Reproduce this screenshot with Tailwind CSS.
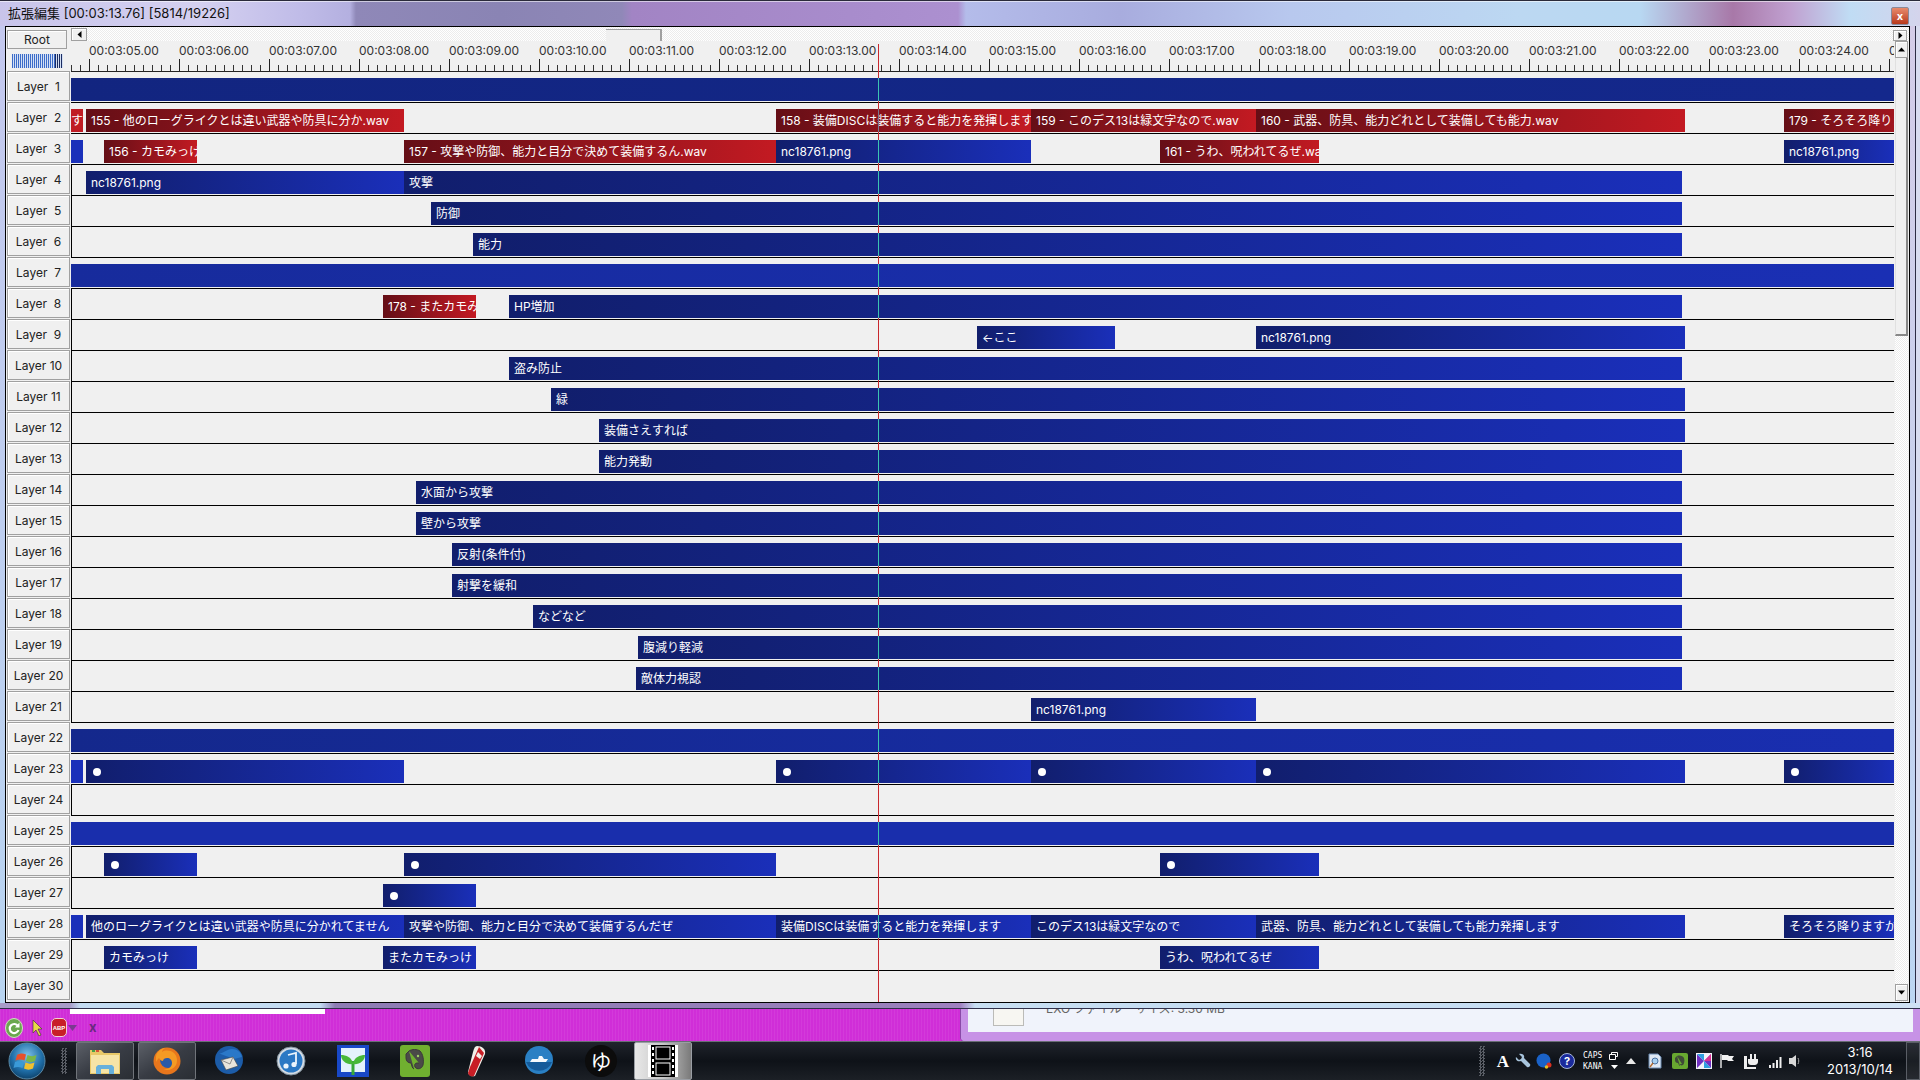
<!DOCTYPE html>
<html lang="ja">
<head>
<meta charset="utf-8">
<script src="https://cdn.jsdelivr.net/npm/@tailwindcss/browser@4"></script>
<title>拡張編集</title>
</head>
<body class="w-[1920px] h-[1080px] overflow-hidden flex flex-col bg-[#d02ed8] text-[12px] leading-none text-[#222] font-['Inter','Noto_Sans_CJK_JP',sans-serif]">

<!-- upper window -->
<div class="h-[1009px] flex flex-col shrink-0 bg-[#c0d8f2] border-b border-[#30304a]">
  <div class="h-[26px] flex items-center justify-between pl-[8px] pr-[11px] border-t border-[#2a2a3a] shadow-[inset_0_1px_0_#ffffff90] bg-[linear-gradient(90deg,#c8c4ea_0,#d4d0f0_200px,#c0bce8_300px,#b4b0e0_350px,#8f88b8_356px,#8a84b4_500px,#9088b8_622px,#a284c4_632px,#a88ccc_850px,#ac90d0_958px,#b4bcea_966px,#a8acde_1120px,#b8c8ee_1290px,#bcd8f2_1520px,#b8d8f2_1640px,#a878a8_1733px,#c0a0d0_1790px,#c0dcf4_1850px,#d4d4ec_1920px)]">
    <span class="text-[13px] text-[#111] whitespace-pre -mt-[1px]">拡張編集 [00:03:13.76] [5814/19226]</span>
    <div class="mt-[5px] w-[18px] h-[18px] rounded-[2px] border border-[#8a8a9a] bg-linear-to-b from-[#e88a6c] to-[#b8381a] flex items-center justify-center text-white text-[11px] font-bold">x</div>
  </div>
  <div class="flex-1 flex min-h-0">
    <div class="w-[5px] bg-linear-to-b from-[#c4c8ee] to-[#b8d4f0]"></div>
    <div class="w-[1905px] h-[977px] border border-black bg-[#f0f0f0] relative">
      <div class="grid grid-cols-[65px_1824px_14px] grid-rows-[14px_31px_930px] relative">
        <!-- root cell -->
        <div class="row-span-2 pl-px pt-[3px]">
          <div class="w-[60px] h-[19px] border border-[#a0a0a0] shadow-[inset_1px_1px_0_#fff] flex items-center justify-center text-[#222]">Root</div>
          <div class="mt-[5px] ml-[5px] w-[51px] h-[14px] bg-[repeating-linear-gradient(90deg,#3c6cc8_0,#3c6cc8_1px,#d4e0f4_1px,#d4e0f4_2px)] flex justify-end"><div class="w-[8px] h-full bg-[repeating-linear-gradient(90deg,#1c2c60_0,#1c2c60_1px,#d4e0f4_1px,#d4e0f4_2px)]"></div></div>
        </div>
        <!-- horizontal scrollbar -->
        <div class="col-span-2 flex items-end justify-between pr-[2px] bg-[repeating-conic-gradient(#ffffff_0_25%,#ececec_0_50%)] bg-[length:2px_2px]">
          <div class="w-[16px] h-[13px] bg-[#f0f0f0] border border-[#a0a0a0] shadow-[inset_1px_1px_0_#fff] flex items-center justify-center"><svg width="5" height="7" viewBox="0 0 5 7"><path d="M4.5 0v7L.5 3.500z" fill="#000"/></svg></div>
          <div class="w-[56px] h-[12px] bg-[#f0f0f0] border-t border-r-2 border-[#a0a0a0] ml-[519px] mr-auto"></div>
          <div class="w-[14px] h-[11px] bg-[#f0f0f0] border border-[#a0a0a0] shadow-[inset_1px_1px_0_#fff] flex items-center justify-center"><svg width="5" height="7" viewBox="0 0 5 7"><path d="M.5 0v7l4-3.500z" fill="#000"/></svg></div>
        </div>
        <!-- ruler -->
        <div class="w-[1823px] overflow-hidden flex flex-col text-[#333]">
          <div class="h-[18px] pl-[18px] flex items-center whitespace-nowrap pt-[2px]">
            <span class="w-[90px] shrink-0">00:03:05.00</span><span class="w-[90px] shrink-0">00:03:06.00</span><span class="w-[90px] shrink-0">00:03:07.00</span><span class="w-[90px] shrink-0">00:03:08.00</span><span class="w-[90px] shrink-0">00:03:09.00</span><span class="w-[90px] shrink-0">00:03:10.00</span><span class="w-[90px] shrink-0">00:03:11.00</span><span class="w-[90px] shrink-0">00:03:12.00</span><span class="w-[90px] shrink-0">00:03:13.00</span><span class="w-[90px] shrink-0">00:03:14.00</span><span class="w-[90px] shrink-0">00:03:15.00</span><span class="w-[90px] shrink-0">00:03:16.00</span><span class="w-[90px] shrink-0">00:03:17.00</span><span class="w-[90px] shrink-0">00:03:18.00</span><span class="w-[90px] shrink-0">00:03:19.00</span><span class="w-[90px] shrink-0">00:03:20.00</span><span class="w-[90px] shrink-0">00:03:21.00</span><span class="w-[90px] shrink-0">00:03:22.00</span><span class="w-[90px] shrink-0">00:03:23.00</span><span class="w-[90px] shrink-0">00:03:24.00</span><span class="w-[90px] shrink-0">00:03:25.00</span>
          </div>
          <div class="h-[13px] border-b border-[#222] bg-[repeating-linear-gradient(90deg,#333_0,#333_1px,transparent_1px,transparent_9px)] bg-[length:100%_6px] bg-bottom bg-no-repeat">
            <div class="ml-[18px] h-full bg-[repeating-linear-gradient(90deg,#222_0,#222_1px,transparent_1px,transparent_90px)]"></div>
          </div>
        </div>
        <!-- vertical scrollbar -->
        <div class="row-span-2 w-[13px] flex flex-col bg-[repeating-conic-gradient(#ffffff_0_25%,#ececec_0_50%)] bg-[length:2px_2px]">
          <div class="h-[17px] shrink-0 bg-[#f0f0f0] border border-[#a0a0a0] shadow-[inset_1px_1px_0_#fff] flex items-center justify-center"><svg width="7" height="5" viewBox="0 0 7 5"><path d="M0 4.500h7L3.500.5z" fill="#000"/></svg></div>
          <div class="h-[278px] shrink-0 bg-[#f0f0f0] border-r-2 border-b-2 border-[#888] border-l border-l-[#e0e0e0]"></div>
          <div class="flex-1"></div>
          <div class="h-[17px] shrink-0 mb-[1px] bg-[#f0f0f0] border border-[#a0a0a0] shadow-[inset_1px_1px_0_#fff] flex items-center justify-center"><svg width="7" height="5" viewBox="0 0 7 5"><path d="M0 .5h7L3.500 4.500z" fill="#000"/></svg></div>
        </div>

        <!-- layers -->
        <div class="col-span-2 flex flex-col pr-px">

          <div class="h-[31px] flex"><div class="ml-px w-[63px] h-[30px] -mt-px mr-px pt-px border border-[#a0a0a0] shadow-[inset_1px_1px_0_#fff] flex items-center justify-center whitespace-pre">Layer  1</div>
            <div class="relative w-[1823px] h-[31px] border-b border-black">
              <div class="absolute top-[6px] h-[23px] left-0 w-[1823px] bg-linear-to-r from-[#122580] to-[#14288c]"></div>
              <i class="absolute left-[807px] top-[6px] h-[23px] w-px z-20 bg-[#3cc4b2]"></i>
            </div></div>

          <div class="h-[31px] flex"><div class="ml-px w-[63px] h-[30px] -mt-px mr-px pt-px border border-[#a0a0a0] shadow-[inset_1px_1px_0_#fff] flex items-center justify-center whitespace-pre">Layer  2</div>
            <div class="relative w-[1823px] h-[31px] border-b border-black">
              <div class="absolute top-[6px] h-[23px] left-0 w-[12px] flex items-center justify-end overflow-hidden whitespace-nowrap text-white bg-[#c01c24]"><span>です</span></div>
              <div class="absolute top-[6px] h-[23px] left-[15px] w-[318px] flex items-center overflow-hidden whitespace-nowrap pl-[5px] text-white bg-linear-to-r from-[#650e16] to-[#c31a22]">155 - 他のローグライクとは違い武器や防具に分か.wav</div>
              <div class="absolute top-[6px] h-[23px] left-[705px] w-[255px] flex items-center overflow-hidden whitespace-nowrap pl-[5px] text-white bg-linear-to-r from-[#650e16] to-[#c31a22]">158 - 装備DISCは装備すると能力を発揮します.wav</div>
              <div class="absolute top-[6px] h-[23px] left-[960px] w-[225px] flex items-center overflow-hidden whitespace-nowrap pl-[5px] text-white bg-linear-to-r from-[#650e16] to-[#c31a22]">159 - このデス13は緑文字なので.wav</div>
              <div class="absolute top-[6px] h-[23px] left-[1185px] w-[429px] flex items-center overflow-hidden whitespace-nowrap pl-[5px] text-white bg-linear-to-r from-[#650e16] to-[#c31a22]">160 - 武器、防具、能力どれとして装備しても能力.wav</div>
              <div class="absolute top-[6px] h-[23px] left-[1713px] w-[110px] flex items-center overflow-hidden whitespace-nowrap pl-[5px] text-white bg-linear-to-r from-[#650e16] to-[#a0161e]">179 - そろそろ降りますか.wav</div>
              <i class="absolute left-[807px] top-[6px] h-[23px] w-px z-20 bg-[#7a7a90]"></i>
            </div></div>

          <div class="h-[31px] flex"><div class="ml-px w-[63px] h-[30px] -mt-px mr-px pt-px border border-[#a0a0a0] shadow-[inset_1px_1px_0_#fff] flex items-center justify-center whitespace-pre">Layer  3</div>
            <div class="relative w-[1823px] h-[31px] border-b border-black">
              <div class="absolute top-[6px] h-[23px] left-0 w-[12px] bg-[#1a30ba]"></div>
              <div class="absolute top-[6px] h-[23px] left-[33px] w-[93px] flex items-center overflow-hidden whitespace-nowrap pl-[5px] text-white bg-linear-to-r from-[#650e16] to-[#c31a22]">156 - カモみっけ.wav</div>
              <div class="absolute top-[6px] h-[23px] left-[333px] w-[372px] flex items-center overflow-hidden whitespace-nowrap pl-[5px] text-white bg-linear-to-r from-[#650e16] to-[#c31a22]">157 - 攻撃や防御、能力と目分で決めて装備するん.wav</div>
              <div class="absolute top-[6px] h-[23px] left-[705px] w-[255px] flex items-center overflow-hidden whitespace-nowrap pl-[5px] text-white bg-linear-to-r from-[#111e6c] to-[#1a2fba]">nc18761.png</div>
              <div class="absolute top-[6px] h-[23px] left-[1089px] w-[159px] flex items-center overflow-hidden whitespace-nowrap pl-[5px] text-white bg-linear-to-r from-[#650e16] to-[#c31a22]">161 - うわ、呪われてるぜ.wav</div>
              <div class="absolute top-[6px] h-[23px] left-[1713px] w-[110px] flex items-center overflow-hidden whitespace-nowrap pl-[5px] text-white bg-linear-to-r from-[#111e6c] to-[#1a2fba]">nc18761.png</div>
              <i class="absolute left-[807px] top-[6px] h-[23px] w-px z-20 bg-[#3cc4b2]"></i>
            </div></div>

          <div class="h-[31px] flex"><div class="ml-px w-[63px] h-[30px] -mt-px mr-px pt-px border border-[#a0a0a0] shadow-[inset_1px_1px_0_#fff] flex items-center justify-center whitespace-pre">Layer  4</div>
            <div class="relative w-[1823px] h-[31px] border-b border-black shadow-[inset_1px_0_0_#000]">
              <div class="absolute top-[6px] h-[23px] left-[15px] w-[318px] flex items-center overflow-hidden whitespace-nowrap pl-[5px] text-white bg-linear-to-r from-[#111e6c] to-[#1a2fba]">nc18761.png</div>
              <div class="absolute top-[6px] h-[23px] left-[333px] w-[1278px] flex items-center overflow-hidden whitespace-nowrap pl-[5px] text-white bg-linear-to-r from-[#111e6c] to-[#1a2fba]">攻撃</div>
              <i class="absolute left-[807px] top-[6px] h-[23px] w-px z-20 bg-[#3cc4b2]"></i>
            </div></div>

          <div class="h-[31px] flex"><div class="ml-px w-[63px] h-[30px] -mt-px mr-px pt-px border border-[#a0a0a0] shadow-[inset_1px_1px_0_#fff] flex items-center justify-center whitespace-pre">Layer  5</div>
            <div class="relative w-[1823px] h-[31px] border-b border-black shadow-[inset_1px_0_0_#000]">
              <div class="absolute top-[6px] h-[23px] left-[360px] w-[1251px] flex items-center overflow-hidden whitespace-nowrap pl-[5px] text-white bg-linear-to-r from-[#111e6c] to-[#1a2fba]">防御</div>
              <i class="absolute left-[807px] top-[6px] h-[23px] w-px z-20 bg-[#3cc4b2]"></i>
            </div></div>

          <div class="h-[31px] flex"><div class="ml-px w-[63px] h-[30px] -mt-px mr-px pt-px border border-[#a0a0a0] shadow-[inset_1px_1px_0_#fff] flex items-center justify-center whitespace-pre">Layer  6</div>
            <div class="relative w-[1823px] h-[31px] border-b border-black shadow-[inset_1px_0_0_#000]">
              <div class="absolute top-[6px] h-[23px] left-[402px] w-[1209px] flex items-center overflow-hidden whitespace-nowrap pl-[5px] text-white bg-linear-to-r from-[#111e6c] to-[#1a2fba]">能力</div>
              <i class="absolute left-[807px] top-[6px] h-[23px] w-px z-20 bg-[#3cc4b2]"></i>
            </div></div>

          <div class="h-[31px] flex"><div class="ml-px w-[63px] h-[30px] -mt-px mr-px pt-px border border-[#a0a0a0] shadow-[inset_1px_1px_0_#fff] flex items-center justify-center whitespace-pre">Layer  7</div>
            <div class="relative w-[1823px] h-[31px] border-b border-black">
              <div class="absolute top-[6px] h-[23px] left-0 w-[1823px] bg-linear-to-r from-[#172b9c] to-[#1a2fb4]"></div>
              <i class="absolute left-[807px] top-[6px] h-[23px] w-px z-20 bg-[#3cc4b2]"></i>
            </div></div>

          <div class="h-[31px] flex"><div class="ml-px w-[63px] h-[30px] -mt-px mr-px pt-px border border-[#a0a0a0] shadow-[inset_1px_1px_0_#fff] flex items-center justify-center whitespace-pre">Layer  8</div>
            <div class="relative w-[1823px] h-[31px] border-b border-black shadow-[inset_1px_0_0_#000]">
              <div class="absolute top-[6px] h-[23px] left-[312px] w-[93px] flex items-center overflow-hidden whitespace-nowrap pl-[5px] text-white bg-linear-to-r from-[#650e16] to-[#c31a22]">178 - またカモみっけ.wav</div>
              <div class="absolute top-[6px] h-[23px] left-[438px] w-[1173px] flex items-center overflow-hidden whitespace-nowrap pl-[5px] text-white bg-linear-to-r from-[#111e6c] to-[#1a2fba]">HP増加</div>
              <i class="absolute left-[807px] top-[6px] h-[23px] w-px z-20 bg-[#3cc4b2]"></i>
            </div></div>

          <div class="h-[31px] flex"><div class="ml-px w-[63px] h-[30px] -mt-px mr-px pt-px border border-[#a0a0a0] shadow-[inset_1px_1px_0_#fff] flex items-center justify-center whitespace-pre">Layer  9</div>
            <div class="relative w-[1823px] h-[31px] border-b border-black shadow-[inset_1px_0_0_#000]">
              <div class="absolute top-[6px] h-[23px] left-[906px] w-[138px] flex items-center overflow-hidden whitespace-nowrap pl-[5px] text-white bg-linear-to-r from-[#111e6c] to-[#1a2fba]">←ここ</div>
              <div class="absolute top-[6px] h-[23px] left-[1185px] w-[429px] flex items-center overflow-hidden whitespace-nowrap pl-[5px] text-white bg-linear-to-r from-[#111e6c] to-[#1a2fba]">nc18761.png</div>
            </div></div>

          <div class="h-[31px] flex"><div class="ml-px w-[63px] h-[30px] -mt-px mr-px pt-px border border-[#a0a0a0] shadow-[inset_1px_1px_0_#fff] flex items-center justify-center whitespace-pre">Layer 10</div>
            <div class="relative w-[1823px] h-[31px] border-b border-black shadow-[inset_1px_0_0_#000]">
              <div class="absolute top-[6px] h-[23px] left-[438px] w-[1173px] flex items-center overflow-hidden whitespace-nowrap pl-[5px] text-white bg-linear-to-r from-[#111e6c] to-[#1a2fba]">盗み防止</div>
              <i class="absolute left-[807px] top-[6px] h-[23px] w-px z-20 bg-[#3cc4b2]"></i>
            </div></div>

          <div class="h-[31px] flex"><div class="ml-px w-[63px] h-[30px] -mt-px mr-px pt-px border border-[#a0a0a0] shadow-[inset_1px_1px_0_#fff] flex items-center justify-center whitespace-pre">Layer 11</div>
            <div class="relative w-[1823px] h-[31px] border-b border-black shadow-[inset_1px_0_0_#000]">
              <div class="absolute top-[6px] h-[23px] left-[480px] w-[1134px] flex items-center overflow-hidden whitespace-nowrap pl-[5px] text-white bg-linear-to-r from-[#111e6c] to-[#1a2fba]">緑</div>
              <i class="absolute left-[807px] top-[6px] h-[23px] w-px z-20 bg-[#3cc4b2]"></i>
            </div></div>

          <div class="h-[31px] flex"><div class="ml-px w-[63px] h-[30px] -mt-px mr-px pt-px border border-[#a0a0a0] shadow-[inset_1px_1px_0_#fff] flex items-center justify-center whitespace-pre">Layer 12</div>
            <div class="relative w-[1823px] h-[31px] border-b border-black shadow-[inset_1px_0_0_#000]">
              <div class="absolute top-[6px] h-[23px] left-[528px] w-[1086px] flex items-center overflow-hidden whitespace-nowrap pl-[5px] text-white bg-linear-to-r from-[#111e6c] to-[#1a2fba]">装備さえすれば</div>
              <i class="absolute left-[807px] top-[6px] h-[23px] w-px z-20 bg-[#3cc4b2]"></i>
            </div></div>

          <div class="h-[31px] flex"><div class="ml-px w-[63px] h-[30px] -mt-px mr-px pt-px border border-[#a0a0a0] shadow-[inset_1px_1px_0_#fff] flex items-center justify-center whitespace-pre">Layer 13</div>
            <div class="relative w-[1823px] h-[31px] border-b border-black shadow-[inset_1px_0_0_#000]">
              <div class="absolute top-[6px] h-[23px] left-[528px] w-[1083px] flex items-center overflow-hidden whitespace-nowrap pl-[5px] text-white bg-linear-to-r from-[#111e6c] to-[#1a2fba]">能力発動</div>
              <i class="absolute left-[807px] top-[6px] h-[23px] w-px z-20 bg-[#3cc4b2]"></i>
            </div></div>

          <div class="h-[31px] flex"><div class="ml-px w-[63px] h-[30px] -mt-px mr-px pt-px border border-[#a0a0a0] shadow-[inset_1px_1px_0_#fff] flex items-center justify-center whitespace-pre">Layer 14</div>
            <div class="relative w-[1823px] h-[31px] border-b border-black shadow-[inset_1px_0_0_#000]">
              <div class="absolute top-[6px] h-[23px] left-[345px] w-[1266px] flex items-center overflow-hidden whitespace-nowrap pl-[5px] text-white bg-linear-to-r from-[#111e6c] to-[#1a2fba]">水面から攻撃</div>
              <i class="absolute left-[807px] top-[6px] h-[23px] w-px z-20 bg-[#3cc4b2]"></i>
            </div></div>

          <div class="h-[31px] flex"><div class="ml-px w-[63px] h-[30px] -mt-px mr-px pt-px border border-[#a0a0a0] shadow-[inset_1px_1px_0_#fff] flex items-center justify-center whitespace-pre">Layer 15</div>
            <div class="relative w-[1823px] h-[31px] border-b border-black shadow-[inset_1px_0_0_#000]">
              <div class="absolute top-[6px] h-[23px] left-[345px] w-[1266px] flex items-center overflow-hidden whitespace-nowrap pl-[5px] text-white bg-linear-to-r from-[#111e6c] to-[#1a2fba]">壁から攻撃</div>
              <i class="absolute left-[807px] top-[6px] h-[23px] w-px z-20 bg-[#3cc4b2]"></i>
            </div></div>

          <div class="h-[31px] flex"><div class="ml-px w-[63px] h-[30px] -mt-px mr-px pt-px border border-[#a0a0a0] shadow-[inset_1px_1px_0_#fff] flex items-center justify-center whitespace-pre">Layer 16</div>
            <div class="relative w-[1823px] h-[31px] border-b border-black shadow-[inset_1px_0_0_#000]">
              <div class="absolute top-[6px] h-[23px] left-[381px] w-[1230px] flex items-center overflow-hidden whitespace-nowrap pl-[5px] text-white bg-linear-to-r from-[#111e6c] to-[#1a2fba]">反射(条件付)</div>
              <i class="absolute left-[807px] top-[6px] h-[23px] w-px z-20 bg-[#3cc4b2]"></i>
            </div></div>

          <div class="h-[31px] flex"><div class="ml-px w-[63px] h-[30px] -mt-px mr-px pt-px border border-[#a0a0a0] shadow-[inset_1px_1px_0_#fff] flex items-center justify-center whitespace-pre">Layer 17</div>
            <div class="relative w-[1823px] h-[31px] border-b border-black shadow-[inset_1px_0_0_#000]">
              <div class="absolute top-[6px] h-[23px] left-[381px] w-[1230px] flex items-center overflow-hidden whitespace-nowrap pl-[5px] text-white bg-linear-to-r from-[#111e6c] to-[#1a2fba]">射撃を緩和</div>
              <i class="absolute left-[807px] top-[6px] h-[23px] w-px z-20 bg-[#3cc4b2]"></i>
            </div></div>

          <div class="h-[31px] flex"><div class="ml-px w-[63px] h-[30px] -mt-px mr-px pt-px border border-[#a0a0a0] shadow-[inset_1px_1px_0_#fff] flex items-center justify-center whitespace-pre">Layer 18</div>
            <div class="relative w-[1823px] h-[31px] border-b border-black shadow-[inset_1px_0_0_#000]">
              <div class="absolute top-[6px] h-[23px] left-[462px] w-[1149px] flex items-center overflow-hidden whitespace-nowrap pl-[5px] text-white bg-linear-to-r from-[#111e6c] to-[#1a2fba]">などなど</div>
              <i class="absolute left-[807px] top-[6px] h-[23px] w-px z-20 bg-[#3cc4b2]"></i>
            </div></div>

          <div class="h-[31px] flex"><div class="ml-px w-[63px] h-[30px] -mt-px mr-px pt-px border border-[#a0a0a0] shadow-[inset_1px_1px_0_#fff] flex items-center justify-center whitespace-pre">Layer 19</div>
            <div class="relative w-[1823px] h-[31px] border-b border-black shadow-[inset_1px_0_0_#000]">
              <div class="absolute top-[6px] h-[23px] left-[567px] w-[1044px] flex items-center overflow-hidden whitespace-nowrap pl-[5px] text-white bg-linear-to-r from-[#111e6c] to-[#1a2fba]">腹減り軽減</div>
              <i class="absolute left-[807px] top-[6px] h-[23px] w-px z-20 bg-[#3cc4b2]"></i>
            </div></div>

          <div class="h-[31px] flex"><div class="ml-px w-[63px] h-[30px] -mt-px mr-px pt-px border border-[#a0a0a0] shadow-[inset_1px_1px_0_#fff] flex items-center justify-center whitespace-pre">Layer 20</div>
            <div class="relative w-[1823px] h-[31px] border-b border-black shadow-[inset_1px_0_0_#000]">
              <div class="absolute top-[6px] h-[23px] left-[565px] w-[1046px] flex items-center overflow-hidden whitespace-nowrap pl-[5px] text-white bg-linear-to-r from-[#111e6c] to-[#1a2fba]">敵体力視認</div>
              <i class="absolute left-[807px] top-[6px] h-[23px] w-px z-20 bg-[#3cc4b2]"></i>
            </div></div>

          <div class="h-[31px] flex"><div class="ml-px w-[63px] h-[30px] -mt-px mr-px pt-px border border-[#a0a0a0] shadow-[inset_1px_1px_0_#fff] flex items-center justify-center whitespace-pre">Layer 21</div>
            <div class="relative w-[1823px] h-[31px] border-b border-black shadow-[inset_1px_0_0_#000]">
              <div class="absolute top-[6px] h-[23px] left-[960px] w-[225px] flex items-center overflow-hidden whitespace-nowrap pl-[5px] text-white bg-linear-to-r from-[#111e6c] to-[#1a2fba]">nc18761.png</div>
            </div></div>

          <div class="h-[31px] flex"><div class="ml-px w-[63px] h-[30px] -mt-px mr-px pt-px border border-[#a0a0a0] shadow-[inset_1px_1px_0_#fff] flex items-center justify-center whitespace-pre">Layer 22</div>
            <div class="relative w-[1823px] h-[31px] border-b border-black">
              <div class="absolute top-[6px] h-[23px] left-0 w-[1823px] bg-linear-to-r from-[#14288c] to-[#192eb0]"></div>
              <i class="absolute left-[807px] top-[6px] h-[23px] w-px z-20 bg-[#3cc4b2]"></i>
            </div></div>

          <div class="h-[31px] flex"><div class="ml-px w-[63px] h-[30px] -mt-px mr-px pt-px border border-[#a0a0a0] shadow-[inset_1px_1px_0_#fff] flex items-center justify-center whitespace-pre">Layer 23</div>
            <div class="relative w-[1823px] h-[31px] border-b border-black">
              <div class="absolute top-[6px] h-[23px] left-0 w-[12px] bg-[#1a30ba]"></div>
              <div class="absolute top-[6px] h-[23px] left-[15px] w-[318px] flex items-center pl-[7px] bg-linear-to-r from-[#111e6c] to-[#1a2fba]"><span class="w-2 h-2 rounded-full bg-white"></span></div>
              <div class="absolute top-[6px] h-[23px] left-[705px] w-[255px] flex items-center pl-[7px] bg-linear-to-r from-[#111e6c] to-[#1a2fba]"><span class="w-2 h-2 rounded-full bg-white"></span></div>
              <div class="absolute top-[6px] h-[23px] left-[960px] w-[225px] flex items-center pl-[7px] bg-linear-to-r from-[#111e6c] to-[#1a2fba]"><span class="w-2 h-2 rounded-full bg-white"></span></div>
              <div class="absolute top-[6px] h-[23px] left-[1185px] w-[429px] flex items-center pl-[7px] bg-linear-to-r from-[#111e6c] to-[#1a2fba]"><span class="w-2 h-2 rounded-full bg-white"></span></div>
              <div class="absolute top-[6px] h-[23px] left-[1713px] w-[110px] flex items-center pl-[7px] bg-linear-to-r from-[#111e6c] to-[#1a2fba]"><span class="w-2 h-2 rounded-full bg-white"></span></div>
              <i class="absolute left-[807px] top-[6px] h-[23px] w-px z-20 bg-[#3cc4b2]"></i>
            </div></div>

          <div class="h-[31px] flex"><div class="ml-px w-[63px] h-[30px] -mt-px mr-px pt-px border border-[#a0a0a0] shadow-[inset_1px_1px_0_#fff] flex items-center justify-center whitespace-pre">Layer 24</div>
            <div class="relative w-[1823px] h-[31px] border-b border-black shadow-[inset_1px_0_0_#000]"></div></div>

          <div class="h-[31px] flex"><div class="ml-px w-[63px] h-[30px] -mt-px mr-px pt-px border border-[#a0a0a0] shadow-[inset_1px_1px_0_#fff] flex items-center justify-center whitespace-pre">Layer 25</div>
            <div class="relative w-[1823px] h-[31px] border-b border-black">
              <div class="absolute top-[6px] h-[23px] left-0 w-[1823px] bg-[#192eac]"></div>
              <i class="absolute left-[807px] top-[6px] h-[23px] w-px z-20 bg-[#3cc4b2]"></i>
            </div></div>

          <div class="h-[31px] flex"><div class="ml-px w-[63px] h-[30px] -mt-px mr-px pt-px border border-[#a0a0a0] shadow-[inset_1px_1px_0_#fff] flex items-center justify-center whitespace-pre">Layer 26</div>
            <div class="relative w-[1823px] h-[31px] border-b border-black shadow-[inset_1px_0_0_#000]">
              <div class="absolute top-[6px] h-[23px] left-[33px] w-[93px] flex items-center pl-[7px] bg-linear-to-r from-[#111e6c] to-[#1a2fba]"><span class="w-2 h-2 rounded-full bg-white"></span></div>
              <div class="absolute top-[6px] h-[23px] left-[333px] w-[372px] flex items-center pl-[7px] bg-linear-to-r from-[#111e6c] to-[#1a2fba]"><span class="w-2 h-2 rounded-full bg-white"></span></div>
              <div class="absolute top-[6px] h-[23px] left-[1089px] w-[159px] flex items-center pl-[7px] bg-linear-to-r from-[#111e6c] to-[#1a2fba]"><span class="w-2 h-2 rounded-full bg-white"></span></div>
            </div></div>

          <div class="h-[31px] flex"><div class="ml-px w-[63px] h-[30px] -mt-px mr-px pt-px border border-[#a0a0a0] shadow-[inset_1px_1px_0_#fff] flex items-center justify-center whitespace-pre">Layer 27</div>
            <div class="relative w-[1823px] h-[31px] border-b border-black shadow-[inset_1px_0_0_#000]">
              <div class="absolute top-[6px] h-[23px] left-[312px] w-[93px] flex items-center pl-[7px] bg-linear-to-r from-[#111e6c] to-[#1a2fba]"><span class="w-2 h-2 rounded-full bg-white"></span></div>
            </div></div>

          <div class="h-[31px] flex"><div class="ml-px w-[63px] h-[30px] -mt-px mr-px pt-px border border-[#a0a0a0] shadow-[inset_1px_1px_0_#fff] flex items-center justify-center whitespace-pre">Layer 28</div>
            <div class="relative w-[1823px] h-[31px] border-b border-black">
              <div class="absolute top-[6px] h-[23px] left-0 w-[12px] bg-[#1a30ba]"></div>
              <div class="absolute top-[6px] h-[23px] left-[15px] w-[318px] flex items-center overflow-hidden whitespace-nowrap pl-[5px] text-white bg-linear-to-r from-[#111e6c] to-[#1a2fba]">他のローグライクとは違い武器や防具に分かれてません</div>
              <div class="absolute top-[6px] h-[23px] left-[333px] w-[372px] flex items-center overflow-hidden whitespace-nowrap pl-[5px] text-white bg-linear-to-r from-[#111e6c] to-[#1a2fba]">攻撃や防御、能力と目分で決めて装備するんだぜ</div>
              <div class="absolute top-[6px] h-[23px] left-[705px] w-[255px] flex items-center overflow-hidden whitespace-nowrap pl-[5px] text-white bg-linear-to-r from-[#111e6c] to-[#1a2fba]">装備DISCは装備すると能力を発揮します</div>
              <div class="absolute top-[6px] h-[23px] left-[960px] w-[225px] flex items-center overflow-hidden whitespace-nowrap pl-[5px] text-white bg-linear-to-r from-[#111e6c] to-[#1a2fba]">このデス13は緑文字なので</div>
              <div class="absolute top-[6px] h-[23px] left-[1185px] w-[429px] flex items-center overflow-hidden whitespace-nowrap pl-[5px] text-white bg-linear-to-r from-[#111e6c] to-[#1a2fba]">武器、防具、能力どれとして装備しても能力発揮します</div>
              <div class="absolute top-[6px] h-[23px] left-[1713px] w-[110px] flex items-center overflow-hidden whitespace-nowrap pl-[5px] text-white bg-linear-to-r from-[#111e6c] to-[#1a2fba]">そろそろ降りますか</div>
              <i class="absolute left-[807px] top-[6px] h-[23px] w-px z-20 bg-[#3cc4b2]"></i>
            </div></div>

          <div class="h-[31px] flex"><div class="ml-px w-[63px] h-[30px] -mt-px mr-px pt-px border border-[#a0a0a0] shadow-[inset_1px_1px_0_#fff] flex items-center justify-center whitespace-pre">Layer 29</div>
            <div class="relative w-[1823px] h-[31px] border-b border-black shadow-[inset_1px_0_0_#000]">
              <div class="absolute top-[6px] h-[23px] left-[33px] w-[93px] flex items-center overflow-hidden whitespace-nowrap pl-[5px] text-white bg-linear-to-r from-[#111e6c] to-[#1a2fba]">カモみっけ</div>
              <div class="absolute top-[6px] h-[23px] left-[312px] w-[93px] flex items-center overflow-hidden whitespace-nowrap pl-[5px] text-white bg-linear-to-r from-[#111e6c] to-[#1a2fba]">またカモみっけ</div>
              <div class="absolute top-[6px] h-[23px] left-[1089px] w-[159px] flex items-center overflow-hidden whitespace-nowrap pl-[5px] text-white bg-linear-to-r from-[#111e6c] to-[#1a2fba]">うわ、呪われてるぜ</div>
            </div></div>

          <div class="h-[31px] flex"><div class="ml-px w-[63px] h-[30px] -mt-px mr-px pt-px border border-[#a0a0a0] shadow-[inset_1px_1px_0_#fff] flex items-center justify-center whitespace-pre">Layer 30</div>
            <div class="relative w-[1823px] h-[31px] shadow-[inset_1px_0_0_#000]"></div></div>
        </div>

        <!-- playhead -->
        <div class="absolute left-[872px] top-[17px] bottom-0 w-px bg-[#c8282e] z-10"></div>
      </div>
    </div>
    <div class="w-[10px] flex">
      <div class="w-[5px] bg-linear-to-b from-[#d4cce8] to-[#bcd6f2]"></div>
      <div class="w-[1px] bg-[#2c2c44]"></div>
      <div class="flex-1 bg-[#d8dcf0]"></div>
    </div>
  </div>
  <div class="h-[5px] bg-[linear-gradient(90deg,#a89cc8_0,#a89cc8_70px,#c4dcf2_80px,#c4dcf2_320px,#8e7cb4_335px,#9a80bc_900px,#a080c0_960px,#c8dff2_975px,#c4dcf2_1300px,#d0e2f4_1920px)]"></div>
</div>

<!-- lower strip: magenta browser toolbar and a window behind -->
<div class="h-[32px] flex shrink-0">
  <div class="w-[961px] flex flex-col bg-[#d02ed8] bg-[repeating-linear-gradient(90deg,#ffffff10_0,#ffffff10_1px,transparent_1px,transparent_3px)]">
    <div class="h-[5px] pl-[70px]"><div class="w-[255px] h-full bg-white"></div></div>
    <div class="flex-1 flex items-center pl-[5px]">
      <svg width="18" height="20" viewBox="0 0 18 20"><ellipse cx="9" cy="10" rx="8.500" ry="9.500" fill="#6aa84f" stroke="#cfe3c0"/><path d="M13 8a4.500 4.500 0 1 0 .5 4" fill="none" stroke="#fff" stroke-width="2.200"/><path d="M14.500 4.500v5h-4.500z" fill="#fff"/></svg>
      <svg class="ml-[9px]" width="10" height="16" viewBox="0 0 10 16"><path d="M1 0v13l3-3 3 6 2-1-3-6h4z" fill="#e8d84a" stroke="#333" stroke-width=".6"/></svg>
      <div class="ml-[9px] w-[16px] h-[19px] rounded-[5px] bg-[#c81e28] border border-[#f0d0d8] flex items-center justify-center text-white text-[6px] font-bold font-['Liberation_Sans',sans-serif]">ABP</div>
      <svg class="ml-px" width="9" height="6" viewBox="0 0 9 6"><path d="M0 0h9L4.500 6z" fill="#7a3a90"/></svg>
      <span class="ml-[12px] text-[#6a2a80] font-bold text-[13px]">x</span>
    </div>
  </div>
  <div class="flex-1 border-l-[7px] border-r-[7px] border-b-[9px] border-[#c792e6] rounded-bl-[4px] shadow-[-1px_0_0_#8a4aa8] bg-[#f0f3fb] flex items-start overflow-hidden">
    <div class="ml-[25px] w-[31px] h-[17px] bg-[#f7f6f2] border-r border-b border-l border-[#bbbbb8]"></div>
    <span class="ml-[22px] -mt-[6px] text-[#666] whitespace-pre">EXO ファイル    サイズ: 3.30 MB</span>
  </div>
</div>

<!-- taskbar -->
<div class="h-[39px] shrink-0 flex items-center border-t border-[#6a6e76] bg-linear-to-b from-[#20242c] via-[#0e1218] to-[#1c2026] text-white">
  <div class="w-[54px] flex justify-center">
    <svg width="38" height="38" viewBox="0 0 38 38"><defs><radialGradient id="orb" cx=".5" cy=".35" r=".7"><stop offset="0" stop-color="#7ec2e8"/><stop offset=".6" stop-color="#1f6ea8"/><stop offset="1" stop-color="#0a3a60"/></radialGradient></defs><circle cx="19" cy="19" r="18" fill="url(#orb)" stroke="#5a8aa8"/><path d="M9 13c3-2 6-2 9-.5l-1.500 6c-3-1.500-6-1.500-9 0z" fill="#e8502a"/><path d="M19.500 13c3 1.500 6 1.500 9 0l-1.500 6c-3 1.500-6 1.500-9 0z" fill="#7ab848"/><path d="M7 20c3-1.500 6-1.500 9 0l-1.500 6c-3-1.500-6-1.500-9 0z" fill="#3a9ad8"/><path d="M17.500 20.500c3 1.500 6 1.500 9 0l-1.500 6c-3 1.500-6 1.500-9 0z" fill="#f0c030"/></svg>
  </div>
  <div class="w-[20px] h-[26px] flex justify-center"><div class="w-[6px] h-full bg-[repeating-conic-gradient(#5a5e66_0_25%,transparent_0_50%)] bg-[length:3px_3px]"></div></div>

  <div class="w-[62px] flex justify-center"><div class="w-[58px] h-[38px] rounded-[2px] border border-[#70747a] bg-linear-to-br from-[#5c6068] via-[#383c44] to-[#2a2e34] flex items-center justify-center">
    <svg width="34" height="30" viewBox="0 0 34 30"><path d="M2 4h11l3 3h16v21H2z" fill="#e8c868"/><path d="M3 9h28v18H3z" fill="#f6e4a6"/><path d="M4 4h3v2H4z" fill="#48a048"/><path d="M8 4h3v2H8z" fill="#d85038"/><path d="M10 19h14l2 2v7h-5v-5h-8v5H8v-7z" fill="#66b0dc"/></svg></div></div>
  <div class="w-[62px] flex justify-center"><div class="w-[58px] h-[38px] rounded-[2px] border border-[#70747a] bg-linear-to-br from-[#5c6068] via-[#383c44] to-[#2a2e34] flex items-center justify-center">
    <svg width="30" height="30" viewBox="0 0 30 30"><circle cx="15" cy="15" r="13.500" fill="#e8761c"/><circle cx="16" cy="14" r="8" fill="#2a5aa8"/><path d="M4 10c1-4 5-8 9-8-2 1-3 3-3 4 3-2 8-2 12 1 3 3 4 8 2 12-3 5-9 6-13 4 5 1 9-2 9-6 0-3-2-5-5-5-2 0-4 1-4 3-2 0-3-1-4-3-1 1-2 2-3 4z" fill="#f59a24"/></svg></div></div>

  <div class="w-[62px] flex justify-center"><svg width="30" height="32" viewBox="0 0 30 32"><circle cx="15" cy="15" r="14" fill="#1c5ca8"/><path d="M4 8c4 2 8-4 14-4 5 0 9 3 10 8l-8 2z" fill="#2a78c8"/><path d="M7 15l12-3 5 9-12 4z" fill="#e8e4dc" stroke="#444" stroke-width=".6"/><path d="M7 15l9 4 3-7" fill="none" stroke="#777" stroke-width=".8"/></svg></div>
  <div class="w-[62px] flex justify-center"><svg width="30" height="30" viewBox="0 0 30 30"><circle cx="15" cy="15" r="14" fill="#d4dce4" stroke="#7e8e9a"/><circle cx="15" cy="15" r="11.500" fill="#2a78c4"/><path d="M12 9l8-2v11" fill="none" stroke="#eaf4fc" stroke-width="1.800"/><circle cx="10" cy="20" r="2.600" fill="#eaf4fc"/><circle cx="18" cy="18.500" r="2.600" fill="#eaf4fc"/></svg></div>
  <div class="w-[62px] flex justify-center"><svg width="32" height="32" viewBox="0 0 32 32"><rect width="32" height="32" fill="#1848c8"/><rect x="4" y="3" width="24" height="24" fill="#e4f2fc"/><path d="M16 30V16" stroke="#38a838" stroke-width="3"/><path d="M16 19C15 12 9 10 4 10c0 6 6 10 12 9zM16 19c1-7 7-9 12-9 0 6-6 10-12 9z" fill="#48b838"/></svg></div>
  <div class="w-[62px] flex justify-center"><svg width="30" height="32" viewBox="0 0 30 32"><rect width="30" height="32" rx="3" fill="#70b030"/><path d="M9 6c3-2 8-2 11 0 3 3 4 9 3 14-1 4-6 5-8 2-1-2 0-4 2-4h2M9 6L6 9v4c0 3 2 5 5 5 1 3 1 5 3 6" fill="#4a4a48" stroke="#3a3a38"/><circle cx="18" cy="11" r="1.200" fill="#9fcf68"/></svg></div>
  <div class="w-[62px] flex justify-center"><svg width="22" height="32" viewBox="0 0 22 32"><path d="M11 1c5 0 9 3 8 8L9 31c-4 1-7-1-7-4L7 7c1-4 2-6 4-6z" fill="#f2efe8"/><path d="M13 2l5 6L8 31c-3 1-5 0-6-3L4 22z" fill="#c81e26"/><path d="M12 7l4 4-2 3-4-3z" fill="#f2efe8"/></svg></div>
  <div class="w-[62px] flex justify-center"><svg width="30" height="32" viewBox="0 0 30 32"><circle cx="15" cy="15" r="14" fill="#2a80c4"/><path d="M2 17h26a14 14 0 0 1-26 0z" fill="#145a9a"/><path d="M6 17l2-3h6l1-3h3l2 3h4l-2 3z" fill="#f4f8fc"/></svg></div>
  <div class="w-[62px] flex justify-center"><div class="w-[32px] h-[32px] rounded-full bg-[#0c0c0c] flex items-center justify-center text-white text-[21px]">ゆ</div></div>
  <div class="w-[62px] flex justify-center"><div class="w-[58px] h-[38px] rounded-[2px] border border-[#9a9ea4] bg-linear-to-r from-[#e8e8e8] via-[#c8c8c8] to-[#7a7a7a] flex items-center justify-center">
    <svg width="30" height="32" viewBox="0 0 30 32"><rect width="30" height="32" fill="#fff"/><rect x="3" width="24" height="32" fill="#000"/><rect x="8" y="2" width="14" height="12" fill="#000" stroke="#fff"/><rect x="8" y="18" width="14" height="12" fill="#000" stroke="#fff"/><path d="M4 2h2v3H4zM4 8h2v3H4zM4 14h2v3H4zM4 20h2v3H4zM4 26h2v3H4zM24 2h2v3h-2zM24 8h2v3h-2zM24 14h2v3h-2zM24 20h2v3h-2zM24 26h2v3h-2z" fill="#fff"/></svg></div></div>

  <div class="w-[791px] flex justify-end"><div class="w-[6px] h-[30px] bg-[repeating-conic-gradient(#5a5e66_0_25%,transparent_0_50%)] bg-[length:3px_3px]"></div></div>

  <div class="ml-[10px] w-[16px] text-center text-[17px] font-bold font-['Liberation_Serif',serif]">A</div>
  <svg class="ml-[4px]" width="16" height="16" viewBox="0 0 16 16"><path d="M1 4l3 3 2-1 1-2-3-3c3-1 6 1 5 4l6 6c1 2-1 4-3 3L6 8C3 9 0 7 1 4z" fill="#a8c4dc"/></svg>
  <svg class="ml-[5px]" width="16" height="16" viewBox="0 0 16 16"><circle cx="7.500" cy="7.500" r="7" fill="#1a62c8"/><circle cx="13" cy="12" r="2.500" fill="#d83020"/><circle cx="10.500" cy="14" r="1.800" fill="#e8c020"/></svg>
  <svg class="ml-[7px]" width="16" height="16" viewBox="0 0 16 16"><circle cx="8" cy="8" r="7.500" fill="#1a2a9c" stroke="#a8b8d8"/></svg>
  <span class="-ml-[13px] w-[10px] text-center text-[11px] font-bold">?</span>
  <div class="ml-[11px] w-[35px] flex flex-col gap-[3px] text-[8px] font-['DejaVu_Sans_Mono',monospace]">
    <div class="flex items-center justify-between"><span>CAPS</span><svg width="9" height="8" viewBox="0 0 9 8"><path d="M2.500 2.500V.5h6v4h-2M.5 2.500h6v5h-6z" fill="none" stroke="#fff"/></svg></div>
    <div class="flex items-center justify-between"><span>KANA</span><svg width="7" height="4" viewBox="0 0 7 4"><path d="M0 0h7L3.500 4z" fill="#fff"/></svg></div>
  </div>
  <svg class="ml-[8px]" width="10" height="6" viewBox="0 0 10 6"><path d="M0 6h10L5 0z" fill="#e8e8e8"/></svg>
  <svg class="ml-[11px]" width="16" height="16" viewBox="0 0 16 16"><path d="M2 1h9l3 3v11H2z" fill="#dfe8f4" stroke="#6a8ab0"/><circle cx="8" cy="8" r="3" fill="#a8d0f0" stroke="#4a70a0"/><path d="M6 10l-3 4" stroke="#b06a30" stroke-width="1.400"/></svg>
  <svg class="ml-[9px]" width="16" height="16" viewBox="0 0 16 16"><rect width="16" height="16" rx="2" fill="#68a830"/><path d="M5 3c3-1 6 0 7 2 1 3 0 6-1 7-2 1-3 0-3-1h2M5 3L3 5v2c0 2 1 3 3 3 1 2 1 3 2 3" fill="#3f4a38"/></svg>
  <svg class="ml-[8px]" width="16" height="16" viewBox="0 0 16 16"><rect width="16" height="16" fill="#f2f2f8"/><path d="M1 1l7 7-7 7zM15 1L8 8l7 7z" fill="#7030c0"/><path d="M8 8L1 1h7zM8 8l7 7H8z" fill="#30a0e0"/><path d="M8 8l7-7v7z" fill="#d83090"/></svg>
  <svg class="ml-[7px]" width="16" height="16" viewBox="0 0 16 16"><path d="M2 1v14" stroke="#eee" stroke-width="1.400"/><path d="M3 2h6l1 1h5l-2 3 2 2H9L8 7H3z" fill="#f2f2f2"/></svg>
  <svg class="ml-[8px]" width="16" height="16" viewBox="0 0 16 16"><path d="M1 3h3v11h9v2H1z" fill="#eee"/><path d="M5 6h10v3c0 2-2 3-3 3H8c-2 0-3-1-3-3z" fill="#eee"/><path d="M8 1v5M12 1v5" stroke="#eee" stroke-width="2"/></svg>
  <svg class="ml-[9px]" width="16" height="14" viewBox="0 0 16 14"><path d="M1 11h2v3H1zM4.500 9h2v5h-2zM8 6h2v8H8zM11.500 3h2v11h-2z" fill="#eee"/></svg>
  <svg class="ml-[3px]" width="16" height="16" viewBox="0 0 16 16"><path d="M2 5h3l4-3v12l-4-3H2z" fill="#d8d8d8"/><path d="M11 5c1 2 1 4 0 6" fill="none" stroke="#aaa"/></svg>
  <div class="ml-[12px] w-[90px] flex flex-col items-center gap-[4px] text-[13px]"><span>3:16</span><span>2013/10/14</span></div>
  <div class="ml-px w-[14px] h-[38px] border border-[#5a5e66] bg-white/5"></div>
</div>
</body>
</html>
